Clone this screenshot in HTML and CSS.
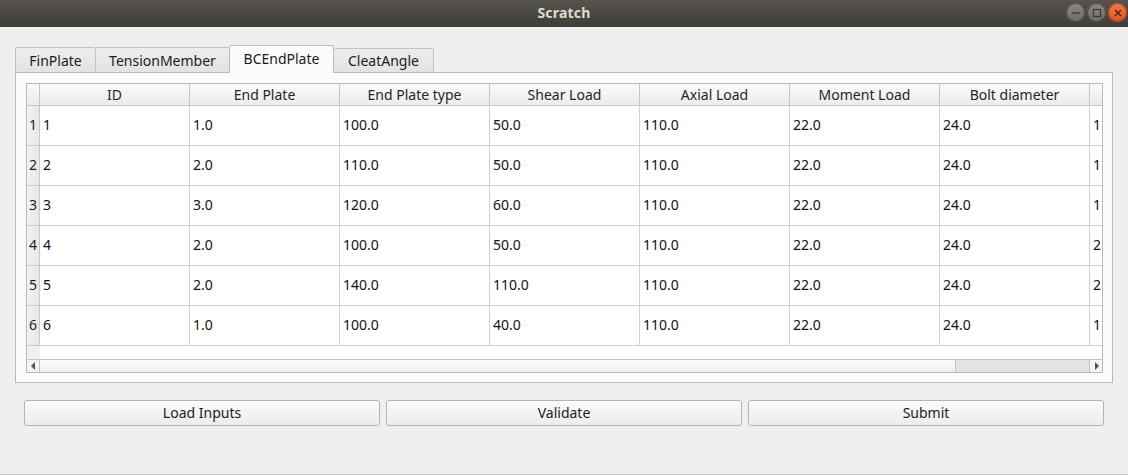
FILE: index.html
```html
<!DOCTYPE html>
<html>
<head>
<meta charset="utf-8">
<link rel="stylesheet" href="styles.css">
</head>
<body>
<div class="window">
  <div class="titlebar">
    <span class="title">Scratch</span>
    <div class="wbtns">
      <span class="wbtn gray"><svg width="10" height="10" viewBox="0 0 10 10"><line x1="1" y1="5" x2="9" y2="5" stroke="#3a3935" stroke-width="1.3"/></svg></span>
      <span class="wbtn gray"><svg width="10" height="10" viewBox="0 0 10 10"><rect x="1.5" y="1.5" width="7" height="7" fill="none" stroke="#3a3935" stroke-width="1.2"/></svg></span>
      <span class="wbtn close"><svg width="10" height="10" viewBox="0 0 10 10"><path d="M2 2L8 8M8 2L2 8" stroke="#4a2010" stroke-width="1.3"/></svg></span>
    </div>
  </div>
  <div class="content">
    <div class="tabs">
      <div class="tab">FinPlate</div>
      <div class="tab">TensionMember</div>
      <div class="tab active">BCEndPlate</div>
      <div class="tab">CleatAngle</div>
    </div>
    <div class="pane">
      <div class="tableview">
        <div class="grid">
          <div class="corner"></div>
          <div class="hcell">ID</div>
          <div class="hcell">End Plate</div>
          <div class="hcell">End Plate type</div>
          <div class="hcell">Shear Load</div>
          <div class="hcell">Axial Load</div>
          <div class="hcell">Moment Load</div>
          <div class="hcell">Bolt diameter</div>
          <div class="hcell last"></div>

          <div class="rhead">1</div><div class="cell">1</div><div class="cell">1.0</div><div class="cell">100.0</div><div class="cell">50.0</div><div class="cell">110.0</div><div class="cell">22.0</div><div class="cell">24.0</div><div class="cell last">1</div>
          <div class="rhead">2</div><div class="cell">2</div><div class="cell">2.0</div><div class="cell">110.0</div><div class="cell">50.0</div><div class="cell">110.0</div><div class="cell">22.0</div><div class="cell">24.0</div><div class="cell last">1</div>
          <div class="rhead">3</div><div class="cell">3</div><div class="cell">3.0</div><div class="cell">120.0</div><div class="cell">60.0</div><div class="cell">110.0</div><div class="cell">22.0</div><div class="cell">24.0</div><div class="cell last">1</div>
          <div class="rhead">4</div><div class="cell">4</div><div class="cell">2.0</div><div class="cell">100.0</div><div class="cell">50.0</div><div class="cell">110.0</div><div class="cell">22.0</div><div class="cell">24.0</div><div class="cell last">2</div>
          <div class="rhead">5</div><div class="cell">5</div><div class="cell">2.0</div><div class="cell">140.0</div><div class="cell">110.0</div><div class="cell">110.0</div><div class="cell">22.0</div><div class="cell">24.0</div><div class="cell last">2</div>
          <div class="rhead">6</div><div class="cell">6</div><div class="cell">1.0</div><div class="cell">100.0</div><div class="cell">40.0</div><div class="cell">110.0</div><div class="cell">22.0</div><div class="cell">24.0</div><div class="cell last">1</div>
        </div>
        <div class="filler"><div class="filler-rh"></div></div>
        <div class="hscroll">
          <div class="arrow left"><svg width="5" height="8" viewBox="0 0 5 8"><path d="M4 0V8L0 4Z" fill="#555"/></svg></div>
          <div class="handle"></div>
          <div class="groove"></div>
          <div class="arrow right"><svg width="5" height="8" viewBox="0 0 5 8"><path d="M1 0V8L5 4Z" fill="#555"/></svg></div>
        </div>
      </div>
    </div>
    <div class="buttons">
      <div class="btn">Load Inputs</div>
      <div class="btn">Validate</div>
      <div class="btn">Submit</div>
    </div>
  </div>
</div>
</body>
</html>
```

FILE: styles.css
```css
* { box-sizing: border-box; }
html, body { margin: 0; padding: 0; }
body {
  width: 1128px;
  height: 475px;
  overflow: hidden;
  background: #efefef;
  font-family: "Noto Sans", "Open Sans", sans-serif;
  font-size: 14px;
  color: #1c1c1c;
}
.window {
  height: 475px;
  display: flex;
  flex-direction: column;
  border-bottom: 1px solid #c6c6c6;
}
.titlebar {
  height: 27px;
  flex: none;
  background: linear-gradient(#57544d, #3d3c38);
  display: flex;
  align-items: center;
  justify-content: center;
  position: relative;
  padding-bottom: 3px;
}
.title {
  color: #dfdbd2;
  font-weight: bold;
  font-size: 14px;
  letter-spacing: 0.2px;
}
.wbtns {
  position: absolute;
  right: 1px;
  top: 3px;
  display: flex;
  gap: 2px;
}
.wbtn {
  width: 19px;
  height: 19px;
  border-radius: 50%;
  display: flex;
  align-items: center;
  justify-content: center;
}
.wbtn.gray {
  background: linear-gradient(#8a8881, #6c6a65);
  box-shadow: inset 0 0 0 1px #4b4a46;
}
.wbtn.close {
  background: linear-gradient(#f17a4a, #e05420);
  box-shadow: inset 0 0 0 1px #a8441c;
}
.content {
  flex: 1;
  padding: 18px 0 0 0;
  display: flex;
  flex-direction: column;
}
.tabs {
  display: flex;
  align-items: flex-start;
  height: 27px;
  margin-left: 15px;
  position: relative;
  z-index: 1;
  flex: none;
}
.tab {
  height: 25px;
  margin-top: 2px;
  border: 1px solid #c2c2c2;
  border-bottom: none;
  border-right: none;
  border-radius: 2px 2px 0 0;
  background: linear-gradient(#ededed, #e3e3e3);
  display: flex;
  align-items: center;
  justify-content: center;
  line-height: 1;
  padding-top: 1px;
}
.tab:nth-child(1) { width: 80px; }
.tab:nth-child(2) { width: 134px; }
.tab:nth-child(3) { width: 105px; }
.tab:nth-child(4) { width: 100px; border-right: 1px solid #c2c2c2; height: 24px; margin-top: 3px; }
.tab.active {
  height: 28px;
  margin-top: 0;
  background: #fbfbfb;
  border: 1px solid #bdbdbd;
  border-bottom: none;
  padding-top: 0;
  padding-bottom: 2px;
}
.tab.active + .tab { border-left: none; }
.pane {
  margin-left: 15px;
  width: 1098px;
  height: 311px;
  border: 1px solid #bbbbbb;
  background: #fbfbfb;
  padding: 10px;
  flex: none;
}
.tableview {
  width: 1077px;
  height: 290px;
  border: 1px solid #b9b9b9;
  background: #ffffff;
  display: flex;
  flex-direction: column;
  overflow: hidden;
}
.grid {
  display: grid;
  grid-template-columns: 13px repeat(7, 150px) 12px;
  grid-template-rows: 22px repeat(6, 40px);
}
.corner, .hcell {
  background: linear-gradient(#fafafa, #ececec);
  border-right: 1px solid #c8c8c8;
  border-bottom: 1px solid #c4c4c4;
}
.hcell {
  display: flex;
  align-items: center;
  justify-content: center;
  color: #262626;
  white-space: nowrap;
  overflow: hidden;
}
.hcell.last, .cell.last { border-right: none; justify-content: flex-start; }
.rhead {
  background: linear-gradient(90deg, #f3f3f3, #e6e6e6);
  border-right: 1px solid #c8c8c8;
  border-bottom: 1px solid #c8c8c8;
  display: flex;
  align-items: center;
  justify-content: center;
  color: #1c1c1c;
  padding-bottom: 2px;
}
.cell {
  border-right: 1px solid #d2d2d2;
  border-bottom: 1px solid #d2d2d2;
  display: flex;
  align-items: center;
  padding-left: 3px;
  padding-bottom: 2px;
  white-space: nowrap;
  overflow: hidden;
  color: #121212;
}
.filler {
  height: 13px;
  display: flex;
}
.filler-rh {
  width: 13px;
  background: #f0f0f0;
}
.hscroll {
  height: 13px;
  border-top: 1px solid #c4c4c4;
  display: flex;
  background: #e3e3e3;
}
.arrow {
  width: 13px;
  display: flex;
  align-items: center;
  justify-content: center;
  background: #f4f4f4;
}
.arrow.left { border-right: 1px solid #c4c4c4; }
.arrow.right { border-left: 1px solid #c4c4c4; width: 13px; }
.handle {
  width: 916px;
  background: linear-gradient(#fbfbfb, #eeeeee);
  border-right: 1px solid #c4c4c4;
}
.groove {
  flex: 1;
  background: #e3e3e3;
}
.buttons {
  display: flex;
  gap: 6px;
  margin: 17px 0 0 24px;
}
.btn {
  width: 356px;
  height: 26px;
  border: 1px solid #b5b5b5;
  border-radius: 3px;
  background: linear-gradient(#fbfbfb, #ececec);
  display: flex;
  align-items: center;
  justify-content: center;
  color: #1c1c1c;
  padding-bottom: 2px;
}
```
